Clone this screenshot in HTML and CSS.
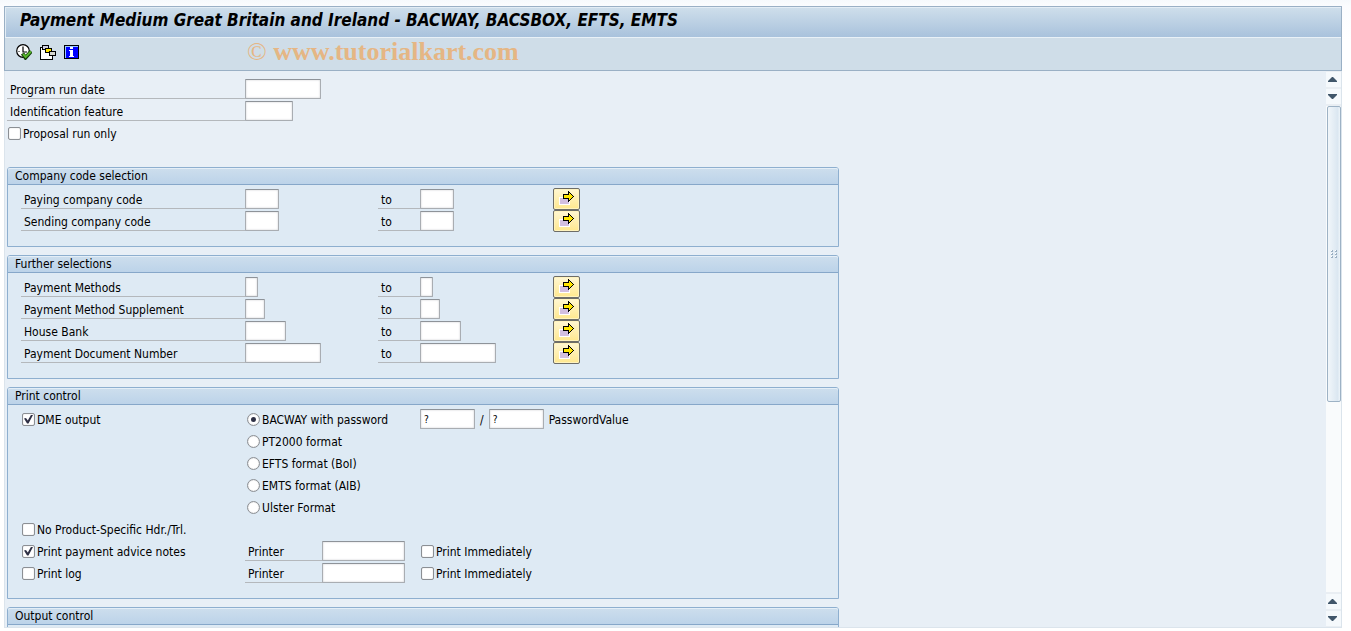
FILE: index.html
```html
<!DOCTYPE html>
<html lang="en">
<head>
<meta charset="utf-8">
<title>Payment Medium Great Britain and Ireland</title>
<link rel="stylesheet" href="styles.css">
</head>
<body>
<svg class="defs" aria-hidden="true">
  <symbol id="multi" viewBox="0 0 16 14" shape-rendering="crispEdges">
    <path fill="#fff" d="M0 6h11v8H0z"/>
    <path fill="#d2bfe0" d="M1 7h9v6H1z"/>
    <path fill="#000" d="M9 0h1v1h1v1h1v1h1v1h1v1h1v1h-1v1h-1v1h-1v1h-1v1h-1v1H9V8H4V3h5z"/>
    <path fill="#ffe600" d="M10 2v2H5v3h5v2h1V8h1V7h1V6h1V5h-1V4h-1V3h-1V2z"/>
  </symbol>
  <symbol id="up" viewBox="0 0 9 5"><path fill="#40566a" d="M0 5V4l4-4h1l4 4v1z"/></symbol>
  <symbol id="down" viewBox="0 0 9 5"><path fill="#40566a" d="M0 0v1l4 4h1l4-4V0z"/></symbol>
</svg>
<div class="window">
  <header class="header">
    <h1 class="title">Payment Medium Great Britain and Ireland - BACWAY, BACSBOX, EFTS, EMTS</h1>
    <div class="toolbar">
      <button class="tool" type="button" aria-label="Execute">
        <svg width="16" height="16" viewBox="0 0 16 16"><circle cx="7" cy="7" r="6.300" fill="#fff" stroke="#000" stroke-width="1.200"/><path d="M7 2.500V8h4M2.500 7.500h1M7 11v1" fill="none" stroke="#000" stroke-width="1.200"/><path d="M6.500 9.500l3 4.200L15.200 7.300" fill="none" stroke="#123c08" stroke-width="3.800"/><path d="M7 10l2.600 3L15 7.500" fill="none" stroke="#58b52c" stroke-width="2"/></svg>
      </button>
      <button class="tool" type="button" aria-label="Get variant">
        <svg width="16" height="16" viewBox="0 0 16 16" shape-rendering="crispEdges"><path d="M0 3h5v3h5v5h3v5H0z" fill="#000"/><path d="M1 4h4v3h4v5h3v3H1z" fill="#fff"/><path d="M2 1h7v5H2z" fill="#000"/><path d="M3 2h5v3H3z" fill="#cfd0e2"/><path d="M5 4h7v5H5z" fill="#000"/><path d="M6 5h5v3H6z" fill="#ffe600"/><path d="M9 7h7v5H9z" fill="#000"/><path d="M10 8h5v3h-5z" fill="#d5d6cf"/></svg>
      </button>
      <button class="tool" type="button" aria-label="Information">
        <svg width="16" height="16" viewBox="0 0 16 16" shape-rendering="crispEdges"><path fill="#000" d="M0 1h15v14H0z"/><path fill="#9cc9ff" d="M1 2h13v12H1z"/><path fill="#00f" d="M2 3h12v11H2z"/><path fill="#fff" d="M6 3h3v2H6zM5 6h4v6h1v1H5v-1h1V7H5z"/></svg>
      </button>
      <span class="brand"><span class="copy">©</span> www.tutorialkart.com</span>
    </div>
  </header>
  <div class="body">
    <main class="content">
      <div class="fields">
        <div class="row"><label class="label" for="date">Program run date</label><input class="input w-date" id="date" type="text"></div>
        <div class="row"><label class="label" for="ident">Identification feature</label><input class="input w-ident" id="ident" type="text"></div>
        <div class="row"><label class="check"><input type="checkbox">Proposal run only</label></div>
      </div>

      <section class="group">
        <h2 class="legend">Company code selection</h2>
        <div class="rows">
          <div class="row range"><label class="label" for="a1">Paying company code</label><input class="input w-code" id="a1" type="text"><label class="label" for="a2">to</label><input class="input w-code" id="a2" type="text"><button class="more" type="button" aria-label="Multiple selection"><svg width="16" height="14"><use href="#multi"/></svg></button></div>
          <div class="row range"><label class="label" for="b1">Sending company code</label><input class="input w-code" id="b1" type="text"><label class="label" for="b2">to</label><input class="input w-code" id="b2" type="text"><button class="more" type="button" aria-label="Multiple selection"><svg width="16" height="14"><use href="#multi"/></svg></button></div>
        </div>
      </section>

      <section class="group">
        <h2 class="legend">Further selections</h2>
        <div class="rows">
          <div class="row range"><label class="label" for="c1">Payment Methods</label><input class="input w-one" id="c1" type="text"><label class="label" for="c2">to</label><input class="input w-one" id="c2" type="text"><button class="more" type="button" aria-label="Multiple selection"><svg width="16" height="14"><use href="#multi"/></svg></button></div>
          <div class="row range"><label class="label" for="d1">Payment Method Supplement</label><input class="input w-two" id="d1" type="text"><label class="label" for="d2">to</label><input class="input w-two" id="d2" type="text"><button class="more" type="button" aria-label="Multiple selection"><svg width="16" height="14"><use href="#multi"/></svg></button></div>
          <div class="row range"><label class="label" for="e1">House Bank</label><input class="input w-bank" id="e1" type="text"><label class="label" for="e2">to</label><input class="input w-bank" id="e2" type="text"><button class="more" type="button" aria-label="Multiple selection"><svg width="16" height="14"><use href="#multi"/></svg></button></div>
          <div class="row range"><label class="label" for="f1">Payment Document Number</label><input class="input w-date" id="f1" type="text"><label class="label" for="f2">to</label><input class="input w-date" id="f2" type="text"><button class="more" type="button" aria-label="Multiple selection"><svg width="16" height="14"><use href="#multi"/></svg></button></div>
        </div>
      </section>

      <section class="group">
        <h2 class="legend">Print control</h2>
        <div class="rows">
          <div class="row print"><label class="check"><input type="checkbox" checked>DME output</label><label class="check radio"><input type="radio" name="format" checked>BACWAY with password</label>
            <div class="password"><input class="input w-pass" type="text" value="?" aria-label="Password"><span>/</span><input class="input w-pass" type="text" value="?" aria-label="Password value"><span>PasswordValue</span></div></div>
          <div class="row print"><label class="check radio"><input type="radio" name="format">PT2000 format</label></div>
          <div class="row print"><label class="check radio"><input type="radio" name="format">EFTS format (BoI)</label></div>
          <div class="row print"><label class="check radio"><input type="radio" name="format">EMTS format (AIB)</label></div>
          <div class="row print"><label class="check radio"><input type="radio" name="format">Ulster Format</label></div>
          <div class="row print"><label class="check"><input type="checkbox">No Product-Specific Hdr./Trl.</label></div>
          <div class="row print"><label class="check"><input type="checkbox" checked>Print payment advice notes</label>
            <div class="printer"><label class="label" for="p1">Printer</label><input class="input w-printer" id="p1" type="text"></div><label class="check"><input type="checkbox">Print Immediately</label></div>
          <div class="row print"><label class="check"><input type="checkbox">Print log</label>
            <div class="printer"><label class="label" for="p2">Printer</label><input class="input w-printer" id="p2" type="text"></div><label class="check"><input type="checkbox">Print Immediately</label></div>
        </div>
      </section>

      <section class="group">
        <h2 class="legend">Output control</h2>
        <div class="rows"></div>
      </section>
    </main>
    <div class="scroll">
      <button class="arrow" type="button" aria-label="Scroll up"><svg width="9" height="5"><use href="#up"/></svg></button>
      <button class="arrow" type="button" aria-label="Scroll down"><svg width="9" height="5"><use href="#down"/></svg></button>
      <div class="track"><div class="thumb"><svg width="7" height="8" shape-rendering="crispEdges"><path fill="#fff" d="M0 0h2v2H0zM4 0h2v2H4zM0 3h2v2H0zM4 3h2v2H4zM0 6h2v2H0zM4 6h2v2H4z"/><path fill="#9bb0c3" d="M1 0h1v1H1zM0 1h2v1H0zM5 0h1v1H5zM4 1h2v1H4zM1 3h1v1H1zM0 4h2v1H0zM5 3h1v1H5zM4 4h2v1H4zM1 6h1v1H1zM0 7h2v1H0zM5 6h1v1H5zM4 7h2v1H4z"/></svg></div></div>
      <button class="arrow" type="button" aria-label="Page up"><svg width="9" height="5"><use href="#up"/></svg></button>
      <button class="arrow" type="button" aria-label="Page down"><svg width="9" height="5"><use href="#down"/></svg></button>
    </div>
  </div>
</div>
</body>
</html>
```
FILE: styles.css
```css
* { box-sizing: border-box; }

body {
  margin: 0;
  background: linear-gradient(#f6f9fc, #fbfcfe 6px, #fff 40px);
  color: #000;
  font: 12px/16px "DejaVu Sans Condensed", "DejaVu Sans", sans-serif;
}

button { padding: 0; border: 0; background: none; font: inherit; }
svg { display: block; }
.defs { position: absolute; width: 0; height: 0; }

.window {
  display: flex;
  flex-direction: column;
  height: 100vh;
  padding: 6px 9px 3px 4px;
}

.header {
  flex: none;
  border: 1px solid #9ab0c5;
  background: #cfdde8;
}

.title {
  height: 31px;
  margin: 0;
  padding: 2px 15px;
  border-bottom: 1px solid #e9f1f7;
  box-shadow: inset 1px 1px #e3edf5;
  background: linear-gradient(#cfdfeb, #a9c2dc);
  font-size: 17px;
  font-weight: bold;
  font-style: italic;
  line-height: 23px;
  white-space: nowrap;
}

.toolbar {
  display: flex;
  align-items: center;
  height: 32px;
  padding: 0 11px 4px;
  gap: 8px;
}

.tool { width: 16px; height: 16px; }

.brand {
  margin-left: 159px;
  color: #e5b684;
  font: bold 26px/28px "Liberation Serif", serif;
  white-space: nowrap;
}

.copy { font-weight: normal; }

.body {
  display: flex;
  flex: 1;
  min-height: 0;
  border: 1px solid #dbe4ec;
  border-top: 0;
  background: #e8eff6;
}

.content {
  display: flex;
  flex: 1;
  flex-direction: column;
  gap: 8px;
  min-width: 0;
  padding: 7px 2px 0;
  overflow: hidden;
}

.fields {
  flex: none;
  padding-bottom: 15px;
}

.row {
  display: flex;
  align-items: center;
  height: 22px;
}

.label {
  flex: none;
  width: 238px;
  height: 20px;
  padding-left: 3px;
  border-bottom: 1px solid #b4b8bc;
  line-height: 22px;
}

.input {
  height: 20px;
  padding: 2px 3px;
  border: 1px solid #a9adb2;
  border-top-color: #8e9399;
  border-radius: 1px;
  background: #fff;
  box-shadow: inset 0 0 2px #c4c7cb;
  font: 10px/14px "DejaVu Sans Condensed", "DejaVu Sans", sans-serif;
}

.w-one { width: 13px; }
.w-two { width: 20px; }
.w-code { width: 34px; }
.w-bank { width: 41px; }
.w-ident { width: 48px; }
.w-pass { width: 55px; }
.w-date { width: 76px; }
.w-printer { width: 83px; }

.group {
  flex: none;
  max-width: 832px;
  border: 1px solid #8eafcf;
  border-radius: 3px 3px 0 0;
  background: #deeaf4;
}

.legend {
  height: 17px;
  margin: 0;
  padding-left: 7px;
  border-bottom: 1px solid #86a7c9;
  border-radius: 2px 2px 0 0;
  box-shadow: inset 0 1px #e4eef7;
  background: linear-gradient(#cddeed, #bcd3e9);
  font-size: 12px;
  font-weight: normal;
  line-height: 16px;
}

.rows { padding: 3px 13px 14px; }

.range {
  display: grid;
  grid-template-columns: 224px 133px 42px 133px 27px;
}

.range .label { width: auto; }

.more {
  display: grid;
  place-items: center;
  height: 22px;
  padding-bottom: 2px;
  border: 1px solid #6d6d68;
  border-radius: 2px;
  background: linear-gradient(#fff7d3, #ffe88e);
  box-shadow: inset 0 0 0 1px #fff3bd;
}

.check {
  display: flex;
  align-items: center;
  gap: 2px;
  padding: 2px 0 0 1px;
  white-space: nowrap;
}

.check input {
  display: grid;
  place-items: center;
  appearance: none;
  width: 13px;
  height: 13px;
  margin: 0 0 2px;
  border: 1px solid #8b8f94;
  border-radius: 2px;
  background: #fff;
  box-shadow: inset 0 0 1px #aaa;
}

.check input[type="checkbox"]:checked::before {
  content: "";
  width: 9px;
  height: 9px;
  background: #2e3045;
  clip-path: polygon(0 45%, 22% 40%, 42% 68%, 80% 0, 100% 6%, 50% 100%, 34% 100%);
}

.check input[type="radio"] { border-radius: 50%; }

.check input[type="radio"]:checked::before {
  content: "";
  width: 5px;
  height: 5px;
  border-radius: 50%;
  background: #2e3045;
}

.print {
  display: grid;
  grid-template-columns: 224px 175px auto;
}

.check.radio { grid-column: 2; padding-left: 2px; }
.printer { display: flex; }
.printer .label { width: 77px; }

.password {
  display: flex;
  align-items: center;
  gap: 5px;
}

.password span { padding-top: 2px; }

.scroll {
  display: flex;
  flex: none;
  flex-direction: column;
  gap: 2px;
  width: 15px;
  padding: 1px 0;
  background: #e9eef3;
}

.arrow {
  display: grid;
  flex: none;
  place-items: center;
  height: 15px;
  padding-right: 2px;
  background: #f5f9fc;
}

.track {
  flex: 1;
  padding-left: 1px;
  background: #f9fbfc;
}

.thumb {
  display: grid;
  place-items: center;
  height: 61%;
  border: 1px solid #9db2c5;
  border-radius: 2px;
  background: linear-gradient(90deg, #f1f6fa, #dbe7f1 80%, #edf4f9);
}
```
